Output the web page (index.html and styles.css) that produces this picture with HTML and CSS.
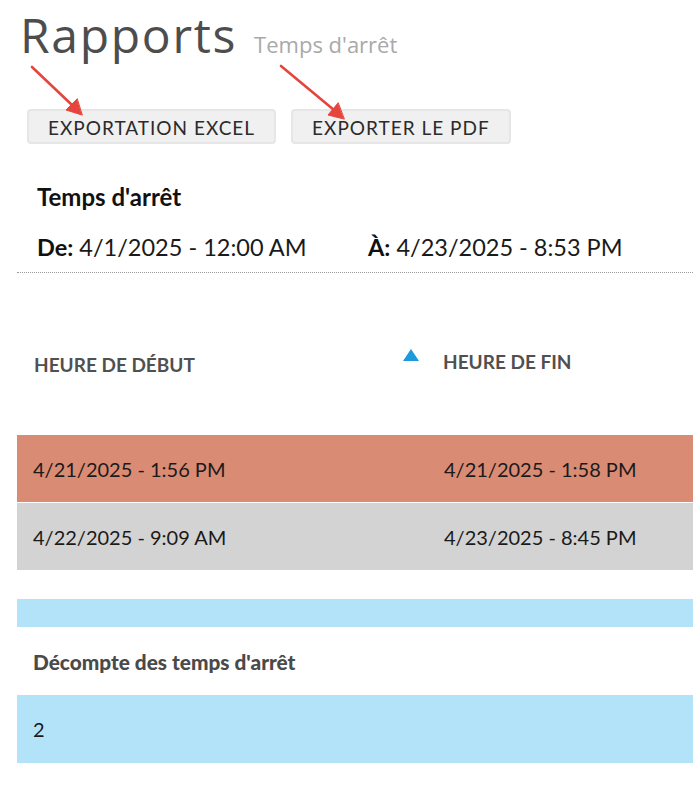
FILE: index.html
```html
<!DOCTYPE html>
<html lang="fr">
<head>
<meta charset="utf-8">
<title>Rapports - Temps d'arrêt</title>
<link rel="stylesheet" href="styles.css">
</head>
<body>
<div class="page">
  <header class="title-row">
    <h1 class="title">Rapports</h1>
    <span class="subtitle">Temps d'arrêt</span>
  </header>

  <div class="actions">
    <button class="btn" type="button">Exportation Excel</button>
    <button class="btn" type="button">Exporter le PDF</button>
  </div>

  <svg class="annotations" width="693" height="160" viewBox="0 0 693 160" aria-hidden="true">
    <g stroke="#e5453d" stroke-width="2.6" stroke-linecap="round" fill="#e5453d">
      <line x1="32" y1="67" x2="72" y2="105"/>
      <polygon points="82,115 66,110 77,99" stroke-width="1" stroke-linejoin="round"/>
      <line x1="281" y1="66" x2="334" y2="110"/>
      <polygon points="344,119 328,115 338,103" stroke-width="1" stroke-linejoin="round"/>
    </g>
  </svg>

  <section class="report">
    <h2 class="report-title">Temps d'arrêt</h2>
    <div class="range">
      <div class="range-item"><b>De:</b> 4/1/2025 - 12:00 AM</div>
      <div class="range-item"><b>À:</b> 4/23/2025 - 8:53 PM</div>
    </div>
  </section>

  <div class="table">
    <div class="thead">
      <div class="th th-start">Heure de début<span class="sort-up"></span></div>
      <div class="th th-end">Heure de fin</div>
    </div>
    <div class="tr tr-alert">
      <div class="td">4/21/2025 - 1:56 PM</div>
      <div class="td">4/21/2025 - 1:58 PM</div>
    </div>
    <div class="tr tr-muted">
      <div class="td">4/22/2025 - 9:09 AM</div>
      <div class="td">4/23/2025 - 8:45 PM</div>
    </div>
  </div>

  <div class="summary">
    <div class="summary-bar"></div>
    <div class="summary-label">Décompte des temps d'arrêt</div>
    <div class="summary-value">2</div>
  </div>
</div>
</body>
</html>
```

FILE: styles.css
```css
* { box-sizing: border-box; }

html, body {
  margin: 0;
  padding: 0;
  background: #ffffff;
  overflow: hidden;
}

body {
  font-family: Lato, "Open Sans", "Noto Sans", sans-serif;
  color: #1e1e1e;
}

.page {
  position: relative;
  padding-left: 17px;
  width: 693px;
}

.title-row {
  display: flex;
  align-items: baseline;
  gap: 17px;
  padding-top: 7px;
  padding-left: 3px;
  height: 63px;
}

.title {
  margin: 0;
  font-family: "Open Sans", sans-serif;
  font-weight: 400;
  font-size: 48px;
  line-height: 56px;
  letter-spacing: 1.7px;
  color: #4d4d4d;
}

.subtitle {
  font-family: "Open Sans", sans-serif;
  font-size: 22px;
  color: #a9a9a9;
}

.actions {
  display: flex;
  gap: 15px;
  margin-top: 46px;
  padding-left: 10px;
}

.btn {
  height: 35px;
  padding: 2px 19px 0;
  border: 2px solid #e6e6e6;
  border-radius: 4px;
  background: #f0f0f0;
  font-family: Lato, sans-serif;
  font-size: 19px;
  letter-spacing: 1px;
  text-transform: uppercase;
  color: #2b2b2b;
  line-height: 29px;
}

.annotations {
  position: absolute;
  left: 0;
  top: 0;
  pointer-events: none;
}

.report {
  padding-left: 20px;
}

.report-title {
  margin: 38px 0 0;
  font-size: 24px;
  font-weight: 700;
  line-height: 29px;
  color: #111;
}

.range {
  display: flex;
  margin-top: 22px;
  padding-left: 0;
  font-size: 23.5px;
  line-height: 29px;
  color: #1a1a1a;
}

.range-item:first-child {
  width: 331px;
}

.range-item b {
  font-weight: 700;
  color: #111;
}

.table {
  margin-top: 10px;
  border-top: 1px dotted #9a9a9a;
}

.thead {
  display: grid;
  grid-template-columns: 411px 1fr;
  height: 162px;
  padding-top: 80px;
}

.th {
  position: relative;
  padding-left: 17px;
  font-size: 19px;
  font-weight: 700;
  text-transform: uppercase;
  letter-spacing: 0;
  line-height: 23px;
  color: #505050;
}

.th-end {
  padding-left: 15px;
  margin-top: -3px;
}

.sort-up {
  position: absolute;
  right: 9px;
  top: -4px;
  width: 0;
  height: 0;
  border-left: 8px solid transparent;
  border-right: 8px solid transparent;
  border-bottom: 12px solid #1b9bdb;
}

.tr {
  display: grid;
  grid-template-columns: 411px 1fr;
  height: 68px;
  align-items: center;
  border-bottom: 1px solid #ffffff;
}

.tr-alert { background: #da8b74; }
.tr-muted { background: #d3d3d3; height: 67px; border-bottom: 0; }

.td {
  padding-left: 16px;
  font-size: 20px;
  color: #1a1a1a;
}

.summary {
  margin-top: 29px;
}

.summary-bar {
  height: 28px;
  background: #b3e3f9;
}

.summary-label {
  display: flex;
  align-items: center;
  height: 68px;
  padding-left: 16px;
  font-size: 20.8px;
  font-weight: 900;
  color: #4a4a4a;
}

.summary-value {
  display: flex;
  align-items: center;
  height: 68px;
  padding-left: 16px;
  font-size: 20px;
  background: #b3e3f9;
  color: #1a1a1a;
}
```
